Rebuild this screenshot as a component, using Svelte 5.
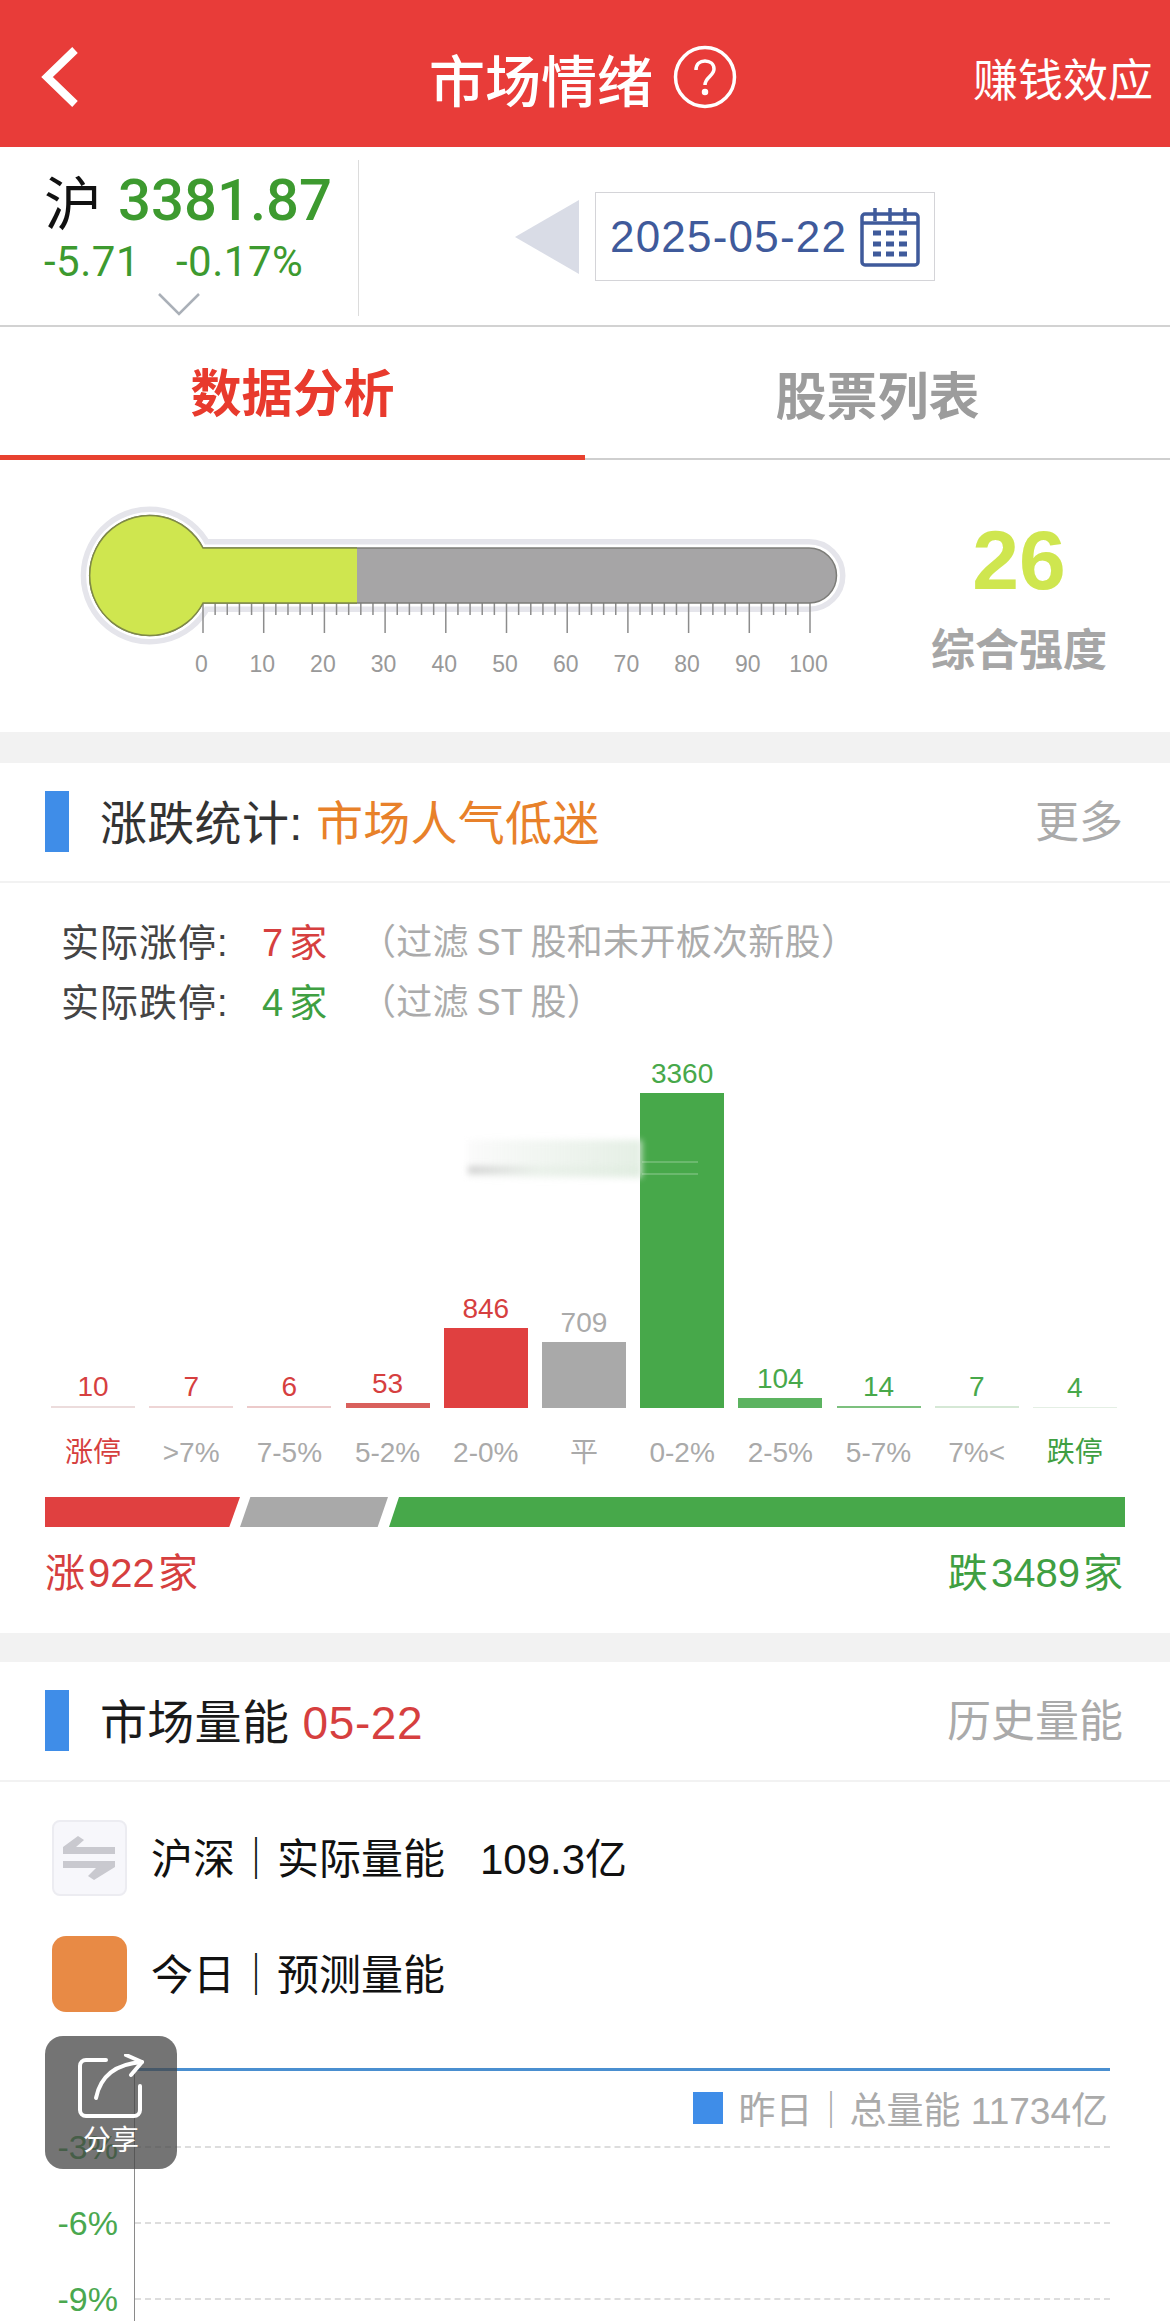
<script>
  const bars = [
    { value: 10, label: '涨停', height: 2, color: '#ecdcdc', tone: 'red', labelTone: 'red' },
    { value: 7, label: '>7%', height: 2, color: '#eed5d5', tone: 'red' },
    { value: 6, label: '7-5%', height: 2, color: '#eccaca', tone: 'red' },
    { value: 53, label: '5-2%', height: 5, color: '#d9605c', tone: 'red' },
    { value: 846, label: '2-0%', height: 80, color: '#e04040', tone: 'red' },
    { value: 709, label: '平', height: 66, color: '#a9a9a9', tone: 'gray' },
    { value: 3360, label: '0-2%', height: 315, color: '#47a84a', tone: 'green' },
    { value: 104, label: '2-5%', height: 10, color: '#5cb360', tone: 'green' },
    { value: 14, label: '5-7%', height: 2, color: '#7cc07e', tone: 'green' },
    { value: 7, label: '7%<', height: 2, color: '#d5e8d5', tone: 'green' },
    { value: 4, label: '跌停', height: 1, color: '#e4efe4', tone: 'green', labelTone: 'green' }
  ]

  const scale = [0, 10, 20, 30, 40, 50, 60, 70, 80, 90, 100]
  const ticks = Array.from({ length: 51 }, (_, i) => i * 2)
  const tickX = (v) => 123 + v * 6.07
  const outline = 'M123 88 H729 A27.5 27.5 0 0 1 729 143 H123 A60 60 0 1 1 123 88 Z'
</script>

<div class="page">
  <header class="topbar">
    <svg class="back" viewBox="0 0 40 60" fill="none" stroke="#fff" stroke-width="8">
      <polyline points="35,3 7,30 35,57" />
    </svg>
    <div class="title">
      <span>市场情绪</span>
      <svg class="help" viewBox="0 0 64 64" fill="none" stroke="#fff" stroke-width="3.5">
        <circle cx="32" cy="32" r="29.5" />
        <path d="M23 25c0-6 4-9 9-9s9 3 9 8c0 7-9 8-9 16" />
        <circle cx="32" cy="47" r="1.5" fill="#fff" />
      </svg>
    </div>
    <span class="earn">赚钱效应</span>
  </header>

  <section class="quote">
    <div class="index">
      <div class="price"><span class="hu">沪</span><b>3381.87</b></div>
      <div class="change"><span>-5.71</span><span>-0.17%</span></div>
      <svg class="caret" viewBox="0 0 44 24" fill="none" stroke="#aab0b8" stroke-width="2.5">
        <polyline points="2,2 22,22 42,2" />
      </svg>
    </div>
    <div class="datepick">
      <span class="prev"></span>
      <div class="datebox">
        <span>2025-05-22</span>
        <svg class="cal" viewBox="0 0 60 60" fill="none" stroke="#3f5a9b" stroke-width="3.5">
          <rect x="2" y="7" width="56" height="51" rx="3" />
          <path d="M2 16h56M15 1v13M30 1v13M45 1v13" />
          <path d="M13 26h8M26 26h8M39 26h8M13 37h8M26 37h8M39 37h8M13 47h8M26 47h8M39 47h8" stroke-width="5" />
        </svg>
      </div>
    </div>
  </section>

  <nav class="tabs">
    <button class="tab active">数据分析</button>
    <button class="tab">股票列表</button>
  </nav>

  <section class="gauge">
    <svg class="thermo" width="800" height="240" viewBox="0 0 800 240">
      <defs>
        <clipPath id="filled"><rect x="0" y="0" width="277" height="240" /></clipPath>
      </defs>
      <path d={outline} fill="none" stroke="#e5e5eb" stroke-width="18" />
      <path d={outline} fill="#fff" stroke="#fff" stroke-width="7" />
      {#each ticks as t}
        <line x1={tickX(t)} x2={tickX(t)} y1="143" y2={t % 10 === 0 ? 173 : 155} stroke="#8c8c8c" stroke-width="1.5" />
      {/each}
      <path d={outline} fill="#a6a5a6" stroke="#7c7c78" stroke-width="1.5" />
      <path d={outline} fill="#cfe64f" clip-path="url(#filled)" />
      <path d="M277 88H123A60 60 0 1 0 123 143H277" fill="none" stroke="#7f8a45" stroke-width="1.5" />
      {#each scale as s}
        <text x={tickX(s) - 1.5} y="212" text-anchor="middle" class="scale">{s}</text>
      {/each}
    </svg>
    <div class="score">
      <b>26</b>
      <span>综合强度</span>
    </div>
  </section>

  <div class="band"></div>

  <section class="block">
    <div class="blockhead">
      <i class="mark"></i>
      <h2 class="dark">涨跌统计: <em class="orange">市场人气低迷</em></h2>
      <span class="more">更多</span>
    </div>

    <div class="stats">
      <div class="stat"><span class="key">实际涨停:</span><span class="num red"><i>7</i>家</span><span class="note">（过滤&thinsp;ST&thinsp;股和未开板次新股）</span></div>
      <div class="stat"><span class="key">实际跌停:</span><span class="num green"><i>4</i>家</span><span class="note">（过滤&thinsp;ST&thinsp;股）</span></div>
    </div>

    <div class="bars">
      {#each bars as bar}
        <div class="col">
          <span class="val {bar.tone}">{bar.value}</span>
          <div class="bar" style="height: {bar.height}px; background: {bar.color}"></div>
        </div>
      {/each}
      <div class="smudge"></div>
      <div class="smudge-lines"></div>
    </div>
    <div class="labels">
      {#each bars as bar}
        <span class={bar.labelTone || ''}>{bar.label}</span>
      {/each}
    </div>

    <div class="split">
      <div class="seg seg-up"></div>
      <div class="seg seg-flat"></div>
      <div class="seg seg-down"></div>
    </div>
    <div class="totals">
      <span class="red">涨 922 家</span>
      <span class="green">跌 3489 家</span>
    </div>
  </section>

  <div class="band"></div>

  <section class="block">
    <div class="blockhead">
      <i class="mark"></i>
      <h2 class="black">市场量能 <em class="red date">05-22</em></h2>
      <span class="more">历史量能</span>
    </div>

    <div class="legend">
      <div class="legend-row">
        <span class="swatch swap">
          <svg viewBox="0 0 75 76" width="75" height="76" fill="#c9c9cf">
            <polygon points="11,27 26,16 32,20 24,27 63,27 63,34 11,34" />
            <polygon points="11,41 63,41 63,47 42,60 36,56 44,48 11,48" />
          </svg>
        </span>
        <span class="legend-text">沪深｜实际量能&nbsp;&nbsp;&nbsp;109.3亿</span>
      </div>
      <div class="legend-row">
        <span class="swatch today"></span>
        <span class="legend-text">今日｜预测量能</span>
      </div>
    </div>

    <div class="chart">
      <div class="tick"><span class="axis"></span><span class="rule solid"></span></div>
      <div class="yesterday"><i></i><span>昨日｜总量能 11734亿</span></div>
      <div class="tick"><span class="axis">-3%</span><span class="rule"></span></div>
      <div class="tick spaced"><span class="axis">-6%</span><span class="rule"></span></div>
      <div class="tick spaced"><span class="axis">-9%</span><span class="rule"></span></div>
      <div class="spine"></div>
    </div>
  </section>

  <div class="share">
    <svg viewBox="0 0 70 64" width="70" height="64" fill="none" stroke="#fff" stroke-width="4" stroke-linecap="round" stroke-linejoin="round">
      <path d="M30 6H10a6 6 0 0 0-6 6v44a6 6 0 0 0 6 6h48a6 6 0 0 0 6-6V32" />
      <path d="M20 44C24 24 38 10 66 8" />
      <path d="M50 1l16 7-11 13" />
    </svg>
    <span>分享</span>
  </div>
</div>

<style>
  :global(body) {
    margin: 0;
    background: #fff;
  }

  .page {
    position: relative;
    width: 1170px;
    height: 2321px;
    overflow: hidden;
    background: #fff;
    font-family: "Liberation Sans", "Noto Sans CJK SC", sans-serif;
  }

  .topbar {
    height: 147px;
    box-sizing: border-box;
    padding-top: 7px;
    background: #e83c39;
    display: flex;
    align-items: center;
    color: #fff;
  }

  .back {
    width: 40px;
    height: 60px;
    margin-left: 40px;
  }

  .title {
    display: flex;
    align-items: center;
    gap: 20px;
    margin-left: 349px;
    font-size: 56px;
    font-weight: 500;
  }

  .help {
    width: 64px;
    height: 64px;
  }

  .earn {
    margin-left: auto;
    margin-right: 17px;
    font-size: 45px;
  }

  .quote {
    height: 178px;
    border-bottom: 2px solid #d2d2d2;
    display: flex;
  }

  .index {
    width: 359px;
    height: 156px;
    margin-top: 13px;
    border-right: 1px solid #dcdcdc;
    box-sizing: border-box;
    padding-left: 44px;
    font-family: Roboto, "Noto Sans CJK SC", sans-serif;
  }

  .price {
    display: flex;
    align-items: center;
    gap: 16px;
    height: 68px;
    margin-top: 6px;
  }

  .hu {
    font-size: 58px;
    color: #111;
  }

  .price b {
    font-size: 58px;
    font-weight: 500;
    color: #3d9a2f;
    line-height: 1;
  }

  .change {
    display: flex;
    gap: 36px;
    height: 50px;
    align-items: center;
    font-size: 42px;
    letter-spacing: 0.5px;
    color: #3d9a2f;
    margin-top: 2px;
  }

  .caret {
    display: block;
    width: 44px;
    height: 24px;
    margin: 6px 0 0 113px;
  }

  .datepick {
    display: flex;
    align-items: center;
    margin-left: 156px;
    margin-top: 45px;
    height: 89px;
  }

  .prev {
    width: 0;
    height: 0;
    border-style: solid;
    border-width: 37px 64px 37px 0;
    border-color: transparent #d9dce6 transparent transparent;
    margin-right: 16px;
  }

  .datebox {
    width: 340px;
    height: 89px;
    box-sizing: border-box;
    border: 1.5px solid #d4d4d8;
    display: flex;
    align-items: center;
    padding-left: 14px;
    gap: 13px;
    color: #3f5a9b;
    font-size: 44px;
    letter-spacing: 1.2px;
  }

  .cal {
    width: 60px;
    height: 60px;
  }

  .tabs {
    height: 133px;
    display: flex;
    border-bottom: 2px solid #cfcfcf;
    box-sizing: border-box;
  }

  .tab {
    width: 585px;
    border: 0;
    background: none;
    padding: 0;
    font: inherit;
    font-size: 51px;
    font-weight: 700;
    color: #9c9c9c;
  }

  .tab.active {
    color: #e83a2d;
    border-bottom: 5px solid #e8412f;
    margin-bottom: -2px;
    padding-bottom: 3px;
  }

  .gauge {
    height: 272px;
    display: flex;
  }

  .thermo {
    margin-left: 80px;
    margin-top: 0;
  }

  .scale {
    font-size: 23px;
    fill: #999;
  }

  .score {
    display: flex;
    flex-direction: column;
    align-items: center;
    width: 180px;
    margin-left: 49px;
    margin-top: 52px;
  }

  .score b {
    font-size: 84px;
    line-height: 96px;
    color: #cfe64f;
  }

  .score span {
    font-size: 44px;
    line-height: 56px;
    margin-top: 15px;
    font-weight: 700;
    color: #a6a6a6;
  }

  .band {
    height: 31px;
    background: #f2f2f2;
  }

  .block + .band {
    height: 29px;
  }

  .blockhead {
    height: 118px;
    border-bottom: 2px solid #f2f2f2;
    display: flex;
    align-items: center;
    padding: 0 47px 0 45px;
  }

  .mark {
    width: 24px;
    height: 61px;
    background: #3f8de8;
    margin-right: 31px;
    margin-bottom: 2px;
  }

  h2 {
    margin: 0 0 6px;
    font-size: 47px;
    font-weight: 400;
    letter-spacing: 0.3px;
  }

  h2 em {
    font-style: normal;
  }

  .dark {
    color: #333;
  }

  .black {
    color: #1a1a1a;
  }

  .orange {
    color: #e8812a;
  }

  .date {
    font-size: 46px;
    letter-spacing: 0.6px;
  }

  .more {
    margin-left: auto;
    margin-bottom: 6px;
    font-size: 44px;
    color: #aaa;
  }

  .red {
    color: #d63f3f;
  }

  .green {
    color: #3f9f42;
  }

  .stats {
    padding: 26px 0 4px 61px;
    font-size: 38px;
    color: #444;
  }

  .stat {
    display: flex;
    align-items: center;
    height: 60px;
  }

  .key {
    width: 201px;
    letter-spacing: 1px;
  }

  .num {
    width: 98px;
  }

  .num i {
    font-style: normal;
    margin-right: 6px;
  }

  .note {
    color: #ababab;
    font-size: 36px;
    letter-spacing: 0.3px;
  }

  .bars {
    position: relative;
    height: 375px;
    padding-left: 51px;
    display: grid;
    grid-template-columns: repeat(11, 84px);
    column-gap: 14.2px;
    align-items: end;
  }

  .col {
    display: flex;
    flex-direction: column;
    align-items: center;
  }

  .val {
    font-size: 28px;
    line-height: 34px;
    margin-bottom: 2px;
  }

  .val.gray {
    color: #aaa;
  }

  .val.green {
    color: #47a84a;
  }

  .bar {
    width: 84px;
  }

  .smudge {
    position: absolute;
    left: 468px;
    top: 107px;
    width: 174px;
    height: 38px;
    background:
      linear-gradient(90deg, rgba(205, 205, 205, 0.9), rgba(225, 235, 225, 0.5) 40%, rgba(215, 232, 215, 0.3)) 0 26px / 100% 8px no-repeat,
      linear-gradient(90deg, rgba(240, 240, 240, 0.3), rgba(222, 235, 222, 0.8));
    filter: blur(3px);
  }

  .smudge-lines {
    position: absolute;
    left: 642px;
    top: 128px;
    width: 56px;
    height: 10px;
    border-top: 2px solid rgba(255, 255, 255, 0.2);
    border-bottom: 2px solid rgba(255, 255, 255, 0.2);
  }

  .labels {
    padding-left: 51px;
    margin-top: 25px;
    display: grid;
    grid-template-columns: repeat(11, 84px);
    column-gap: 14.2px;
    font-size: 28px;
    line-height: 40px;
    text-align: center;
    color: #aaa;
  }

  .split {
    margin: 24px 45px 0;
    height: 30px;
    display: flex;
  }

  .seg {
    height: 100%;
  }

  .seg-up {
    width: 195px;
    background: #e04040;
    clip-path: polygon(0 0, 100% 0, 94.5% 100%, 0 100%);
  }

  .seg-flat {
    width: 148px;
    background: #a9a9a9;
    clip-path: polygon(7% 0, 100% 0, 93% 100%, 0 100%);
  }

  .seg-down {
    flex: 1;
    background: #47a84a;
    margin-left: 1px;
    clip-path: polygon(10px 0, 100% 0, 100% 100%, 0 100%);
  }

  .totals {
    display: flex;
    justify-content: space-between;
    margin: 26px 47px 40px 45px;
    font-size: 40px;
    line-height: 40px;
    word-spacing: -8px;
  }

  .legend {
    padding: 38px 0 0 52px;
  }

  .legend-row {
    display: flex;
    align-items: center;
    height: 76px;
    font-size: 42px;
    color: #111;
    margin-bottom: 40px;
  }

  .legend-text {
    margin-bottom: 6px;
  }

  .swatch {
    width: 75px;
    height: 76px;
    box-sizing: border-box;
    margin-right: 24px;
    border-radius: 8px;
    display: block;
  }

  .swap {
    background: #f7f7fb;
    border: 2px solid #ececf1;
    position: relative;
  }

  .swap svg {
    position: absolute;
    left: -2px;
    top: -2px;
  }

  .today {
    background: #e88a45;
    border-radius: 14px;
  }

  .chart {
    position: relative;
    margin-top: 57px;
  }

  .tick {
    display: flex;
    align-items: center;
    height: 0;
  }

  .spaced {
    margin-top: 76px;
  }

  .axis {
    width: 118px;
    margin-right: 17px;
    text-align: right;
    font-size: 34px;
    color: #4aa84f;
  }

  .rule {
    width: 975px;
    border-top: 2px dashed #ddd;
  }

  .rule.solid {
    border-top: 3px solid #4a8fd0;
  }

  .yesterday {
    display: flex;
    align-items: center;
    justify-content: flex-end;
    width: 1108px;
    height: 78px;
    font-size: 37px;
    color: #aaa;
  }

  .yesterday i {
    width: 30px;
    height: 32px;
    background: #3f8de8;
    margin-right: 16px;
  }

  .spine {
    position: absolute;
    left: 134px;
    top: 0;
    width: 1px;
    height: 300px;
    background: #8a8a8a;
  }

  .share {
    position: absolute;
    left: 45px;
    top: 2036px;
    width: 132px;
    height: 133px;
    border-radius: 18px;
    background: rgba(70, 70, 70, 0.75);
    color: #fff;
    display: flex;
    flex-direction: column;
    align-items: center;
    padding-top: 18px;
    box-sizing: border-box;
    font-size: 28px;
    line-height: 46px;
  }
</style>
